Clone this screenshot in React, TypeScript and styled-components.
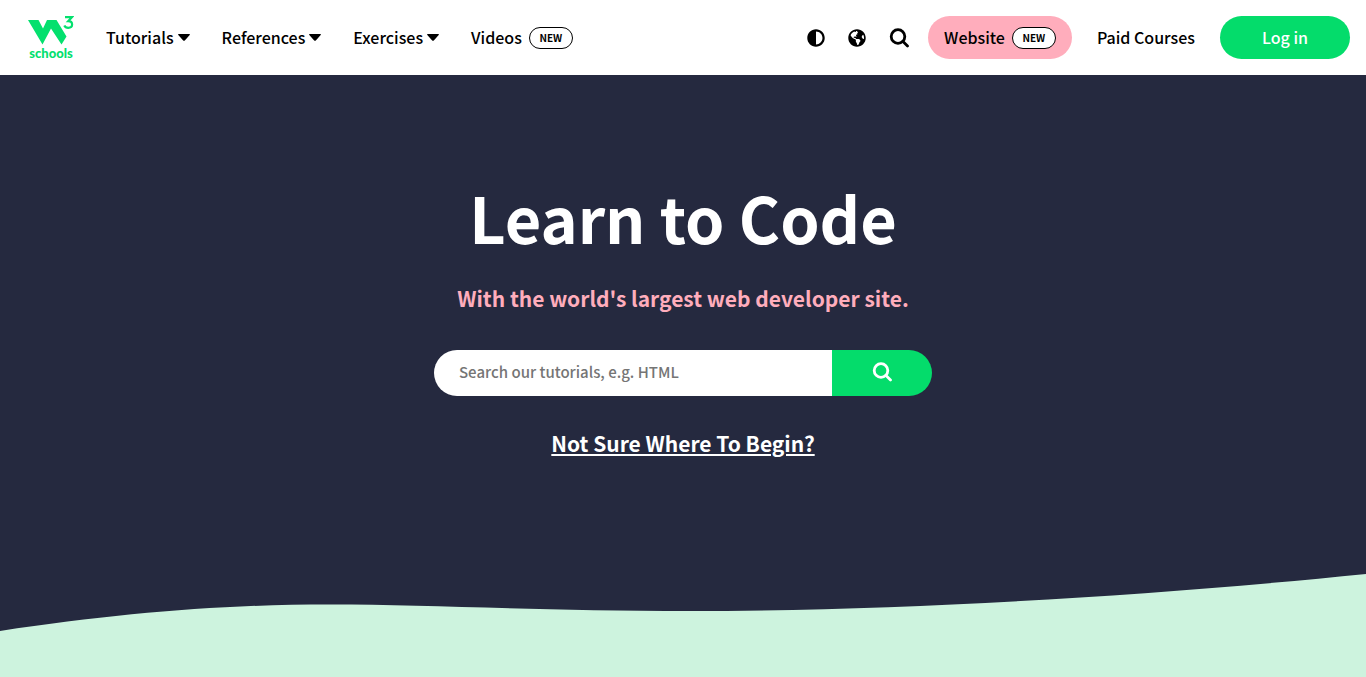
import React from "react";
import styled, { createGlobalStyle } from "styled-components";
import { FaAdjust, FaGlobeAmericas } from "react-icons/fa";

const GlobalStyle = createGlobalStyle`
  * { box-sizing: border-box; }
  html, body, #root { height: 100%; }
  body {
    margin: 0;
    background: #cdf3de;
    color: #000;
    font-family: "Noto Sans CJK SC", "Source Sans Pro", sans-serif;
    font-size: 16px;
    line-height: 24px;
  }
  #root { display: flex; flex-direction: column; }
`;

const Header = styled.header`
  display: flex;
  align-items: center;
  justify-content: space-between;
  height: 75px;
  flex-shrink: 0;
  padding: 0 16px 0 28px;
  background: #fff;
`;

const Group = styled.nav<{ $gap: number }>`
  display: flex;
  align-items: center;
  gap: ${(p) => p.$gap}px;
`;

const LogoLink = styled.a`
  display: flex;
  flex-direction: column;
  width: 46px;
  color: #04e06e;
`;

const NavLink = styled.a`
  display: flex;
  align-items: center;
  color: #000;
  font-weight: 500;
  text-decoration: none;
  white-space: nowrap;
`;

const MenuButton = styled.button`
  display: flex;
  align-items: center;
  gap: 4px;
  padding: 0;
  border: 0;
  background: none;
  color: #000;
  font: inherit;
  font-weight: 500;
`;

const Label = styled.span`
  padding-bottom: 2px;
`;

const Badge = styled.span`
  display: flex;
  align-items: center;
  justify-content: center;
  width: 44px;
  height: 22px;
  margin-left: 7px;
  border: 1px solid #000;
  border-radius: 11px;
  background: #fff;
  font-size: 10px;
  font-weight: 700;
`;

const PinkLink = styled(NavLink)`
  height: 43px;
  padding: 0 16px;
  border-radius: 22px;
  background: #ffadbc;
`;

const IconButton = styled.button`
  display: flex;
  padding: 0;
  border: 0;
  background: none;
  color: #000;
`;

const LoginButton = styled(NavLink)`
  justify-content: center;
  width: 130px;
  height: 43px;
  border-radius: 22px;
  background: #04dc6b;
  color: #fff;
`;

const Hero = styled.main`
  display: flex;
  flex: 1 0 auto;
  flex-direction: column;
  align-items: center;
  justify-content: space-between;
  padding-top: 97px;
  background: #25293f;
`;

const Content = styled.section`
  display: flex;
  flex-direction: column;
  align-items: center;
  color: #fff;
`;

const Title = styled.h1`
  margin: 0;
  font-size: 63px;
  font-weight: 700;
  line-height: 90px;
`;

const Tagline = styled.h2`
  margin: 20px 0 0;
  color: #ffadbc;
  font-size: 21px;
  font-weight: 700;
  line-height: 32px;
`;

const SearchForm = styled.form`
  display: flex;
  width: 498px;
  max-width: 100%;
  height: 46px;
  margin: 36px 0 31px;
`;

const SearchInput = styled.input`
  flex: 1;
  min-width: 0;
  padding: 0 25px 2px;
  border: 0;
  border-radius: 23px 0 0 23px;
  background: #fff;
  font: inherit;
  font-size: 15px;
  font-weight: 500;
  &::placeholder { color: #757575; }
`;

const SearchButton = styled.button`
  display: flex;
  align-items: center;
  justify-content: center;
  width: 100px;
  padding: 0 0 2px;
  border: 0;
  border-radius: 0 23px 23px 0;
  background: #04dc6b;
  color: #fff;
`;

const BeginLink = styled.a`
  color: #fff;
  font-size: 21px;
  font-weight: 700;
  line-height: 32px;
`;

const Wave = styled.svg`
  display: block;
  width: 100%;
  height: 103px;
`;

const Logo = () => (
  <svg width="46" height="44" viewBox="0 0 46 44" fill="currentColor" aria-hidden="true">
    <path d="M0 4H10.500L15 12.500L19 4H28.500L38.500 20.500L33.500 28.500L23 12.500L14.500 28.500Z" />
    <path d="M37 1.200h6.800l-3.600 4c2.600 0 3.900 1.500 3.900 3.300 0 2.100-1.600 3.300-3.900 3.300-1.900 0-3.200-.8-3.900-2.300" fill="none" stroke="currentColor" strokeWidth="2.200" />
    <text x="23" y="42" textAnchor="middle" fontFamily="Lato" fontWeight="900" fontSize="13">schools</text>
  </svg>
);

const Caret = () => (
  <svg width="12" height="7" viewBox="0 0 12 7" fill="currentColor" aria-hidden="true">
    <path d="M.8 0h10.400c.8 0 1 .6.500 1.100L6.800 6.400c-.5.500-1.100.5-1.600 0L.3 1.100C-.2.600 0 0 .8 0z" />
  </svg>
);

const SearchIcon = () => (
  <svg width="20" height="20" viewBox="0 0 20 20" fill="none" stroke="currentColor" strokeWidth="2.800" strokeLinecap="round" aria-hidden="true">
    <circle cx="9" cy="8.500" r="6.800" />
    <path d="M14 13.500l4.500 4.500" />
  </svg>
);

export default function App() {
  return (
    <>
      <GlobalStyle />
      <Header>
        <Group $gap={32} aria-label="Main">
          <LogoLink href="#" aria-label="Home"><Logo /></LogoLink>
          {["Tutorials", "References", "Exercises"].map((name) => (
            <MenuButton key={name} type="button"><Label>{name}</Label><Caret /></MenuButton>
          ))}
          <NavLink href="#videos"><Label>Videos</Label><Badge>NEW</Badge></NavLink>
        </Group>
        <Group $gap={19} aria-label="Account">
          <Group as="div" $gap={23}>
            <IconButton type="button" aria-label="Toggle contrast"><FaAdjust size={18} /></IconButton>
            <IconButton type="button" aria-label="Translate"><FaGlobeAmericas size={18} /></IconButton>
            <IconButton type="button" aria-label="Search"><SearchIcon /></IconButton>
          </Group>
          <Group as="div" $gap={25}>
            <PinkLink href="#website"><Label>Website</Label><Badge>NEW</Badge></PinkLink>
            <NavLink href="#courses"><Label>Paid Courses</Label></NavLink>
            <LoginButton href="#login"><Label>Log in</Label></LoginButton>
          </Group>
        </Group>
      </Header>
      <Hero>
        <Content>
          <Title>Learn to Code</Title>
          <Tagline>With the world's largest web developer site.</Tagline>
          <SearchForm role="search">
            <SearchInput type="text" placeholder="Search our tutorials, e.g. HTML" aria-label="Search our tutorials" />
            <SearchButton type="submit" aria-label="Search"><SearchIcon /></SearchButton>
          </SearchForm>
          <BeginLink href="#begin">Not Sure Where To Begin?</BeginLink>
        </Content>
        <Wave viewBox="0 0 1366 103" preserveAspectRatio="none" aria-hidden="true">
          <path d="M0 57C120 39 220 30.500 330 30.500C430 30.500 540 37 690 37C900 37 1150 22 1366 0V103H0Z" fill="#cdf3de" />
        </Wave>
      </Hero>
    </>
  );
}
